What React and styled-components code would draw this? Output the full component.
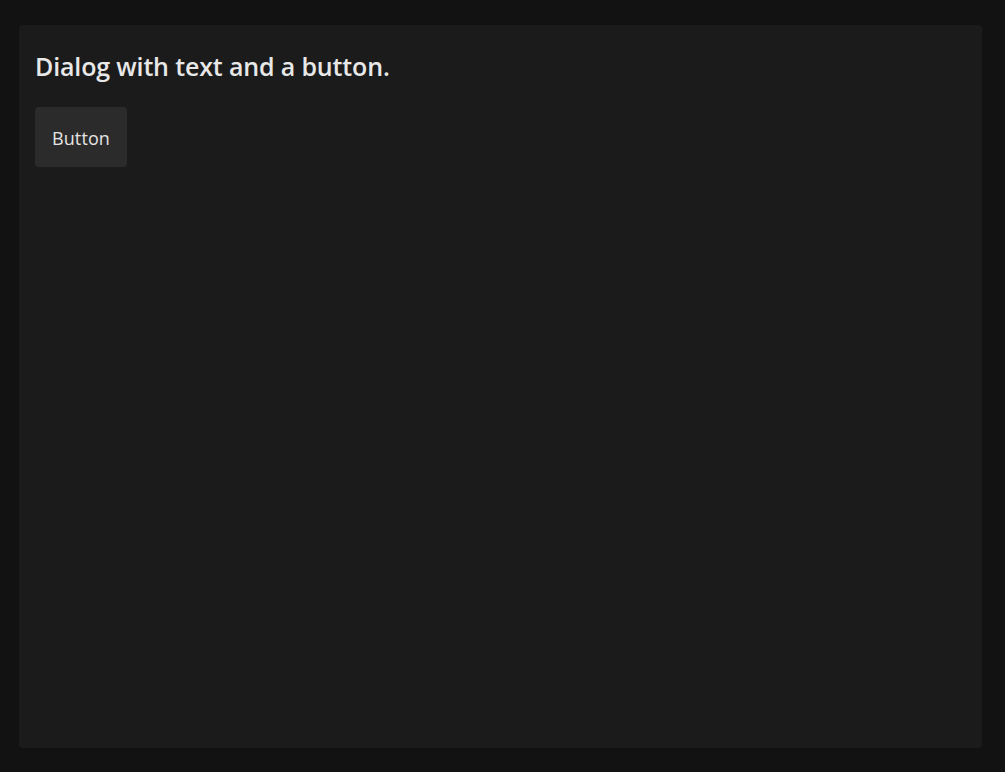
import React from "react";
import styled, { createGlobalStyle } from "styled-components";

const Global = createGlobalStyle`
  html, body { margin: 0; padding: 0; background: #121212; }
  body { font-family: "Open Sans", "Noto Sans", sans-serif; }
  * { box-sizing: border-box; }
`;

const Page = styled.div`
  height: 772px;
  padding: 25px 23px 24px 19px;
  display: flex;
`;

const Panel = styled.div`
  flex: 1;
  background: #1b1b1b;
  border-radius: 4px;
  padding: 22px 16px;
  display: flex;
  flex-direction: column;
  align-items: flex-start;
  gap: 21px;
`;

const Title = styled.h1`
  margin: 0;
  font-size: 25px;
  line-height: 39px;
  font-weight: 600;
  color: #e8e8e8;
  letter-spacing: -0.15px;
`;

const Button = styled.button`
  height: 60px;
  padding: 1px 17px 0;
  border: none;
  border-radius: 4px;
  background: #2b2b2b;
  color: #e4e4e4;
  font-family: "Open Sans", sans-serif;
  font-size: 18px;
  letter-spacing: 0.1px;
`;

export default function App() {
  return (
    <>
      <Global />
      <Page>
        <Panel>
          <Title>Dialog with text and a button.</Title>
          <Button>Button</Button>
        </Panel>
      </Page>
    </>
  );
}
